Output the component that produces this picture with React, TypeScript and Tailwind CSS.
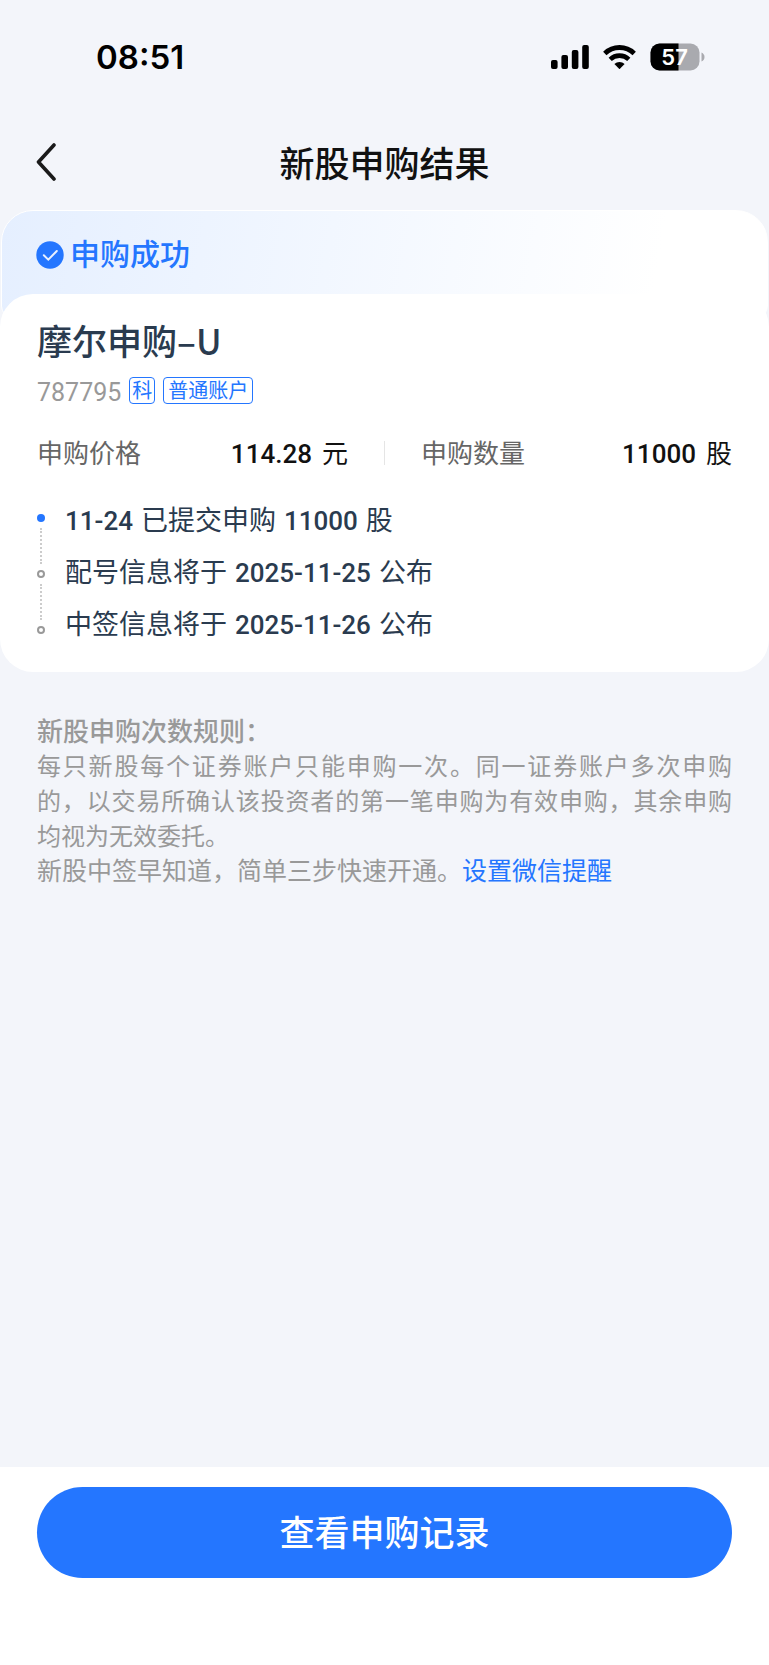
const cjk = 'font-["Noto_Sans_CJK_SC",sans-serif]';
const num = 'font-["Roboto","Noto_Sans_CJK_SC",sans-serif] text-[26px] font-medium';

function StatusBar() {
  return (
    <div className="flex h-[114px] items-center justify-between pr-16 pl-24">
      <time className='font-["Inter",sans-serif] text-[33px] leading-none font-semibold text-black'>08:51</time>
      <div className="flex items-center gap-3.5">
        <svg width="38" height="24" viewBox="0 0 38 24" aria-hidden="true">
          <rect x="0" y="15" width="6.6" height="9" rx="2" />
          <rect x="10.4" y="10" width="6.6" height="14" rx="2" />
          <rect x="20.8" y="5" width="6.6" height="19" rx="2" />
          <rect x="31.2" y="0" width="6.6" height="24" rx="2" />
        </svg>
        <svg width="33" height="24" viewBox="0 0 33 24" fill="none" stroke="#000" aria-hidden="true">
          <path d="M1.8 8.4 A21.2 21.2 0 0 1 31.2 8.4" strokeWidth="4.8" />
          <path d="M7.2 14.4 A13.4 13.4 0 0 1 25.8 14.4" strokeWidth="4.6" />
          <path d="M16.5 24.2 L11.4 19.1 A7.3 7.3 0 0 1 21.6 19.1 Z" fill="#000" stroke="none" />
        </svg>
        <svg width="55" height="28" viewBox="0 0 55 28" role="img" aria-label="57%">
          <defs>
            <clipPath id="battery">
              <rect x="0.5" y="0.5" width="49" height="27" rx="9" />
            </clipPath>
          </defs>
          <g clipPath="url(#battery)">
            <rect width="50" height="28" fill="#a9aaaf" />
            <rect width="28.5" height="28" fill="#000" />
          </g>
          <path d="M51.5 9.5 Q54.5 11 54.5 14 Q54.5 17 51.5 18.5 Z" fill="#a9aaaf" />
          <text x="24.6" y="22" textAnchor="middle" fill="#fff" fontFamily="Inter, sans-serif" fontWeight="600" fontSize="22">57</text>
        </svg>
      </div>
    </div>
  );
}

function Field({ label, value, unit }: { label: string; value: string; unit: string }) {
  return (
    <div className="flex flex-1 items-baseline justify-between">
      <dt className="text-[#666]">{label}</dt>
      <dd className="flex items-baseline gap-2.5 text-[#111]">
        <span className={num}>{value}</span>
        <span>{unit}</span>
      </dd>
    </div>
  );
}

function Dot({ active = false }: { active?: boolean }) {
  return active ? (
    <span className="size-2 rounded-full bg-[#2476ff]" />
  ) : (
    <span className="size-2 rounded-full border-2 border-[#999]" />
  );
}

function Connector() {
  return <span className="my-1.5 h-9 border-l-2 border-dotted border-[#ccc]" />;
}

export default function App() {
  return (
    <div className={`flex min-h-screen flex-col bg-[#f3f5fa] text-[26px] ${cjk}`}>
      <StatusBar />
      <header className="grid h-24 grid-cols-[1fr_auto_1fr] items-center px-9">
        <button type="button" aria-label="返回" className="w-6">
          <svg width="20" height="38" viewBox="0 0 20 38" fill="none" stroke="#1a1a1a" strokeWidth="3.6" strokeLinecap="round" strokeLinejoin="round">
            <path d="M18 2 L2.5 19 L18 36" />
          </svg>
        </button>
        <h1 className="pb-0.5 text-[35px] leading-none font-medium text-[#111]">新股申购结果</h1>
      </header>

      <main className="flex-1">
        <section>
          <div className="mx-px h-[108px] rounded-t-[32px] rounded-b-xl border border-white bg-linear-100 from-[#e5efff] to-white to-85%">
            <div className="flex h-[88px] items-center gap-1.5 pl-[34px] text-[#2476ff]">
              <svg width="28" height="28" viewBox="0 0 28 28" aria-hidden="true">
                <circle cx="14" cy="14" r="13.7" fill="#2476ff" />
                <path d="M7.8 14.2 L12.3 18.6 L20.8 10" fill="none" stroke="#e8f0ff" strokeWidth="2" strokeLinecap="round" />
              </svg>
              <h2 className="pb-1.5 text-[30px] leading-none font-medium">申购成功</h2>
            </div>
          </div>

          <div className="-mt-6 rounded-[33px] bg-white px-[37px] pt-[22px] pb-[23px]">
            <h3 className="text-[35px] leading-[48px] font-medium text-[#2a3b4f]">摩尔申购–U</h3>
            <div className="flex h-[52px] items-center">
              <span className='mr-2 pt-1 font-["Roboto",sans-serif] text-[25px] leading-none text-[#999]'>787795</span>
              <span className="mr-2 flex h-[27px] items-center rounded-sm border border-[#2476ff] px-0.5 text-xl leading-none text-[#2476ff]">科</span>
              <span className="flex h-[27px] items-center rounded-sm border border-[#2476ff] px-1 text-xl leading-none text-[#2476ff]">普通账户</span>
            </div>
            <dl className="flex h-[73px] items-center gap-9">
              <Field label="申购价格" value="114.28" unit="元" />
              <div className="h-6 w-px bg-[#e5e5e5]" />
              <Field label="申购数量" value="11000" unit="股" />
            </dl>
            <div className="mt-1 flex gap-5 text-[27px] text-[#2a3b4f]">
              <div className="flex w-2 flex-col items-center pt-[21px]" aria-hidden="true">
                <Dot active />
                <Connector />
                <Dot />
                <Connector />
                <Dot />
              </div>
              <ol className="leading-[52px]">
                <li className="flex h-[52px] items-baseline gap-2">
                  <span className={num}>11-24</span>
                  <span>已提交申购</span>
                  <span className={num}>11000</span>
                  <span>股</span>
                </li>
                <li className="flex h-[52px] items-baseline gap-2">
                  <span>配号信息将于</span>
                  <span className={num}>2025-11-25</span>
                  <span>公布</span>
                </li>
                <li className="flex h-[52px] items-baseline gap-2">
                  <span>中签信息将于</span>
                  <span className={num}>2025-11-26</span>
                  <span>公布</span>
                </li>
              </ol>
            </div>
          </div>
        </section>

        <section className="px-[37px] pt-10 text-2xl leading-[35px] text-[#999]">
          <h2 className="text-[26px] leading-[35px] font-medium">新股申购次数规则：</h2>
          <p className="text-justify leading-[35px]">
            每只新股每个证券账户只能申购一次。同一证券账户多次申购的，以交易所确认该投资者的第一笔申购为有效申购，其余申购均视为无效委托。
          </p>
          <p className="text-[25px] leading-[35px]">
            新股中签早知道，简单三步快速开通。
            <a href="#wechat" className="text-[#2476ff]">设置微信提醒</a>
          </p>
        </section>
      </main>

      <footer className="h-[198px] bg-white px-[37px] pt-5">
        <button type="button" className="h-[91px] w-full rounded-full bg-[#2476ff] pb-1 text-[35px] leading-none font-medium text-white">
          查看申购记录
        </button>
      </footer>
    </div>
  );
}
